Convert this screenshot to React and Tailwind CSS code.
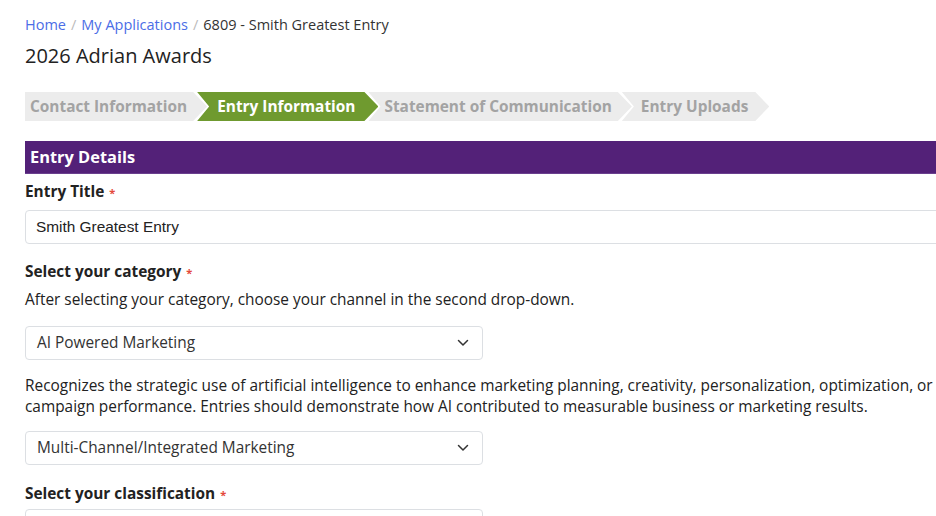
const steps = [
  { label: 'Contact Information', first: true, cls: 'pl-[5px] pr-[20px]' },
  { label: 'Entry Information', active: true, cls: 'pl-[20px] pr-[23px]' },
  { label: 'Statement of Communication', cls: 'pl-[16px] pr-[20px]' },
  { label: 'Entry Uploads', cls: 'pl-[19px] pr-[21px]' },
];

function Required() {
  return <span className="text-[#e4483a] text-[11px] ml-[5px] align-middle">*</span>;
}

function FieldLabel({ children }) {
  return (
    <div className="font-bold text-[15.4px] text-[#222] leading-[22px]">
      {children}
      <Required />
    </div>
  );
}

function Chevron() {
  return (
    <svg width="12" height="8" viewBox="0 0 12 8" fill="none" className="shrink-0">
      <path d="M1.5 1.5 L6 6 L10.5 1.5" stroke="#333" strokeWidth="1.5" strokeLinecap="round" strokeLinejoin="round" />
    </svg>
  );
}

function SelectBox({ value }) {
  return (
    <div className="w-[458px] h-[34px] border border-[#dcdfe3] rounded-[4px] flex items-center justify-between pl-[11px] pr-[13px] text-[15.4px] text-[#333]">
      <span>{value}</span>
      <Chevron />
    </div>
  );
}

function StepBar() {
  return (
    <div className="flex h-[29px] font-bold text-[15.4px]">
      {steps.map((s, i) => (
        <div
          key={s.label}
          className={`flex items-center whitespace-nowrap ${s.cls} ${i > 0 ? '-ml-[10px]' : ''} ${
            s.active ? 'bg-[#6f9a2f] text-white' : 'bg-[#ececec] text-[#a3a3a3]'
          } ${
            s.first
              ? '[clip-path:polygon(0_0,calc(100%-14px)_0,100%_50%,calc(100%-14px)_100%,0_100%)]'
              : '[clip-path:polygon(0_0,calc(100%-14px)_0,100%_50%,calc(100%-14px)_100%,0_100%,12px_50%)]'
          }`}
        >
          {s.label}
        </div>
      ))}
    </div>
  );
}

export default function App() {
  return (
    <div className="w-[936px] h-[516px] overflow-hidden bg-white font-['Open_Sans',sans-serif]">
      <div className="w-[950px] ml-[25px]">
        <nav className="pt-[15px] text-[14.5px] leading-[20px] flex gap-[5px]">
          <a className="text-[#4b6de6]">Home</a>
          <span className="text-[#bbb]">/</span>
          <a className="text-[#4b6de6]">My Applications</a>
          <span className="text-[#bbb]">/</span>
          <span className="text-[#333]">6809 - Smith Greatest Entry</span>
        </nav>
        <h1 className="mt-[8px] text-[20px] leading-[26px] text-[#222]">2026 Adrian Awards</h1>

        <div className="mt-[23px]">
          <StepBar />
        </div>

        <div className="mt-[20px] h-[33px] bg-[#532178] border-b border-[#6a3f8e] text-white font-bold text-[16.4px] flex items-center pl-[5px]">
          Entry Details
        </div>

        <div className="mt-[7px]">
          <FieldLabel>Entry Title</FieldLabel>
          <div className="mt-[6px] h-[34px] border border-[#dcdfe3] rounded-[4px] flex items-center pl-[10px] text-[15.4px] text-[#222] font-['Liberation_Sans',Arial,sans-serif]">
            Smith Greatest Entry
          </div>
        </div>

        <div className="mt-[17px]">
          <FieldLabel>Select your category</FieldLabel>
          <p className="mt-[5px] text-[15.4px] leading-[22px] text-[#222]">
            After selecting your category, choose your channel in the second drop-down.
          </p>
          <div className="mt-[15px]">
            <SelectBox value="AI Powered Marketing" />
          </div>
          <p className="mt-[15px] text-[15.4px] leading-[21px] text-[#222]">
            Recognizes the strategic use of artificial intelligence to enhance marketing planning, creativity, personalization, optimization, or campaign performance. Entries should demonstrate how AI contributed to measurable business or marketing results.
          </p>
          <div className="mt-[14px]">
            <SelectBox value="Multi-Channel/Integrated Marketing" />
          </div>
        </div>

        <div className="mt-[18px]">
          <FieldLabel>Select your classification</FieldLabel>
          <div className="mt-[3px] w-[458px] h-[34px] border border-[#dcdfe3] rounded-[4px]" />
        </div>
      </div>
    </div>
  );
}
